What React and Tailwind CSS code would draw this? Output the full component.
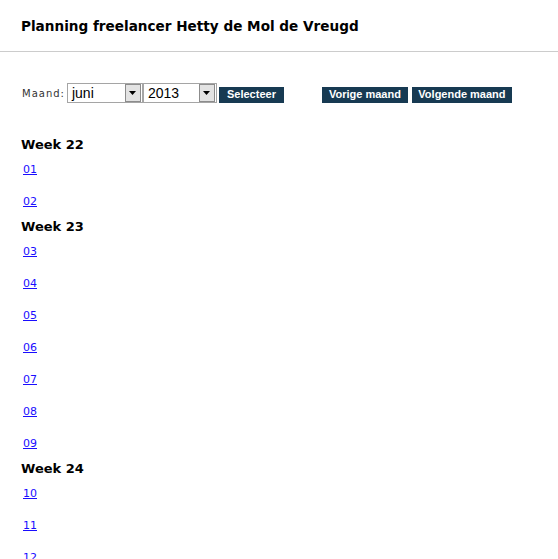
const WEEKS = [
  ['Week 22', ['01', '02']],
  ['Week 23', ['03', '04', '05', '06', '07', '08', '09']],
  ['Week 24', ['10', '11', '12', '13', '14', '15', '16']],
]

function Select({ value, width }) {
  return (
    <div className={`flex h-[20px] items-center border border-[#a5a5a5] bg-white ${width}`}>
      <span className="flex-1 pl-[4px] font-['Liberation_Sans',sans-serif] text-[14px] leading-none text-black">{value}</span>
      <span className="mr-px grid h-[18px] w-[16px] place-items-center border border-[#8c8c8c] bg-[#e3e3e3]">
        <svg width="7" height="4" viewBox="0 0 7 4"><path d="M0 0h7L3.5 4z" fill="#000" /></svg>
      </span>
    </div>
  )
}

function Btn({ children, width }) {
  return (
    <button className={`h-[16px] ${width} bg-[#173a52] font-['Liberation_Sans',sans-serif] text-[11px] font-bold leading-none text-white`}>
      {children}
    </button>
  )
}

export default function App() {
  return (
    <div className="min-h-[559px] bg-white font-['DejaVu_Sans',sans-serif] text-black">
      {/* header */}
      <div className="flex h-[52px] items-center border-b border-[#cccccc] pl-[21px] pt-[2px]">
        <h1 className="text-[13.6px] font-bold">Planning freelancer Hetty de Mol de Vreugd</h1>
      </div>

      <div className="pl-[21px]">
        {/* month picker */}
        <div className="mt-[29px] flex items-center">
          <span className="ml-px mr-[2px] text-[10px] tracking-[1px] text-[#333]">Maand:</span>
          <Select value="juni" width="w-[76px]" />
          <Select value="2013" width="w-[74px]" />
          <div className="ml-[2px]"><Btn width="w-[65px]">Selecteer</Btn></div>
          <div className="ml-[38px]"><Btn width="w-[86px]">Vorige maand</Btn></div>
          <div className="ml-[4px]"><Btn width="w-[100px]">Volgende maand</Btn></div>
        </div>

        {/* weeks */}
        <div className="mt-[31px] flex flex-col">
          {WEEKS.map(([week, days]) => (
            <div key={week} className="flex flex-col">
              <h2 className="flex h-[18px] items-center text-[13px] font-bold">{week}</h2>
              {days.map((d) => (
                <div key={d} className="flex h-[32px] items-center pl-[2px]">
                  <a href="#" className="text-[11px] text-[#1a0dff] underline">{d}</a>
                </div>
              ))}
            </div>
          ))}
        </div>
      </div>
    </div>
  )
}
